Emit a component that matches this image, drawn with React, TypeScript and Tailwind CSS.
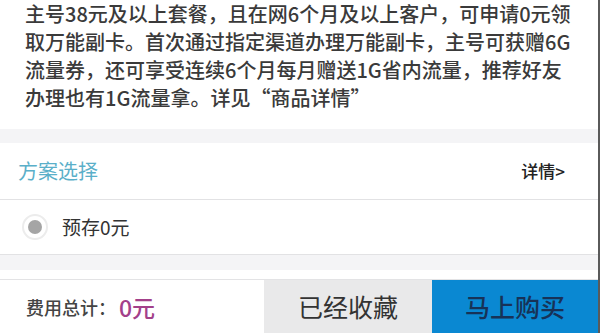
const cjk = { fontFamily: '"Noto Sans CJK SC", "Noto Sans", sans-serif' };

const intro = [
  "主号38元及以上套餐，且在网6个月及以上客户，可申请0元领",
  "取万能副卡。首次通过指定渠道办理万能副卡，主号可获赠6G",
  "流量券，还可享受连续6个月每月赠送1G省内流量，推荐好友",
  "办理也有1G流量拿。详见“商品详情”",
];

export default function App() {
  return (
    <div className="flex h-[333px] w-[600px] overflow-hidden bg-white" style={cjk}>
      <div className="flex w-[598px] flex-col">
        <div className="h-[129px] pl-[25px] pt-0 text-[20px] font-medium leading-[28px] text-[#3a3a3a]">
          {intro.map((line) => (
            <p key={line} className="whitespace-nowrap">{line}</p>
          ))}
        </div>
        <div className="h-[14px] bg-[#f4f4f6]" />
        <div className="flex h-[56px] items-center justify-between pl-[18px] pr-[33px]">
          <span className="text-[20px] text-[#5aafc9]">方案选择</span>
          <span className="text-[17px] font-medium text-[#222]">详情&gt;</span>
        </div>
        <div className="flex h-[56px] items-center border-y border-[#e2e2e4] pl-[22px]">
          <span className="flex h-[26px] w-[26px] items-center justify-center rounded-full border-2 border-[#ececec]">
            <span className="h-[14px] w-[14px] rounded-full bg-[#a5a5a5]" />
          </span>
          <span className="ml-[14px] text-[19px] text-[#333]">预存0元</span>
        </div>
        <div className="h-[15px] bg-[#f4f4f6]" />
        <div className="h-[10px] border-b border-[#e3e3e5]" />
        <div className="flex flex-1 items-stretch">
          <div className="flex flex-1 items-center pl-[26px] pt-[2px]">
            <span className="text-[18px] font-medium text-[#444]">费用总计：</span>
            <span className="ml-[3px] text-[23px] font-medium text-[#a3408a]">0元</span>
          </div>
          <div className="flex w-[168px] items-center justify-center bg-[#e9e9ea] text-[25px] text-[#333]">
            已经收藏
          </div>
          <div className="flex w-[166px] items-center justify-center bg-[#0a88d2] text-[25px] font-medium text-[#173257]">
            马上购买
          </div>
        </div>
      </div>
      <div className="w-[2px] bg-[#5a5a5a]" />
    </div>
  );
}
